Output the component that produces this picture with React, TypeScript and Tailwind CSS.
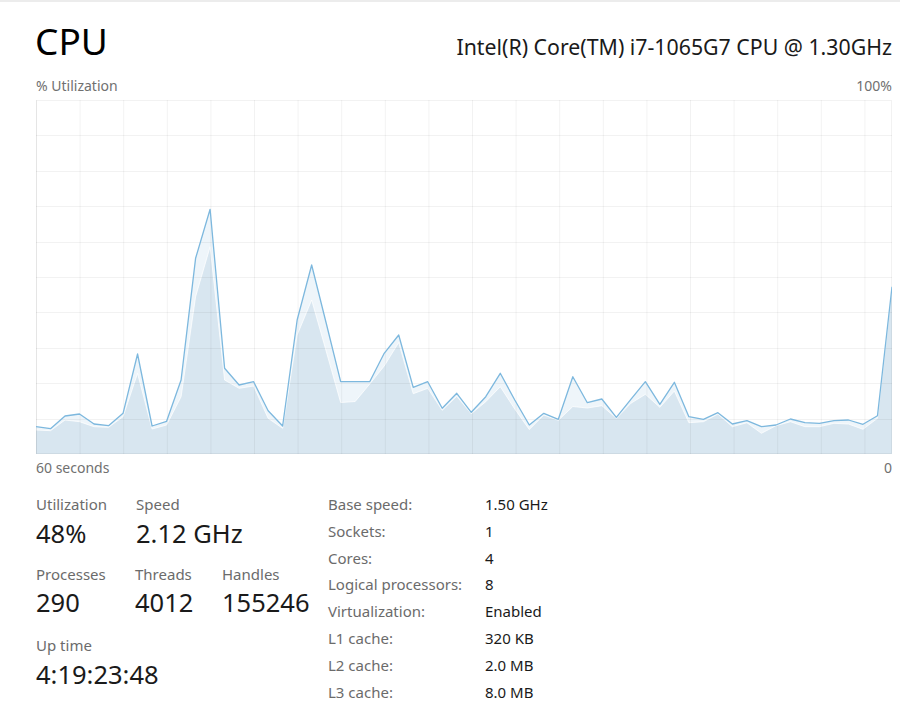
import React from "react";

const outer = [426.7,428.7,416,414,424,425.7,413.3,354,426,421.3,380,258.3,209.3,368.3,385,381.7,410.7,426,320,265,323,381.7,381.7,381.7,353.3,335,387.3,381.7,408.3,393.3,412.3,396.7,373.3,400,425,413.3,419.3,376.7,402.7,399,417.3,399.3,381.7,404.3,382.3,416.7,419.3,412.7,424,420.7,426.7,425,419,422.7,423.3,420.7,420,424.3,415.7,286.7];
const inner = [430,430.7,420,421.7,426.7,427.3,416.7,373.3,429,425,396.7,296.7,246.7,380,388.3,386,418.3,428.3,335,300,351,402.5,401.5,384,366,342.5,393.7,388.3,410.3,396.3,413.7,401.7,386.7,409,429.5,415,420.3,406.5,408,405.7,418.3,403.3,394.3,407.3,391,422.7,421.7,414,426.7,422.7,433.3,425.7,421.7,426.7,426.7,423.3,424,429.3,418.3,288.3];

const W = 856;
const H = 354;
const step = W / 59;

function pts(arr: number[]) {
  return arr.map((y, i) => `${(i * step).toFixed(2)},${(y - 100).toFixed(2)}`).join(" ");
}

function Chart() {
  const o = pts(outer);
  const n = pts(inner);
  const vlines: number[] = [];
  for (let x = 0; x < W; x += 43.6) vlines.push(x);
  const hlines: number[] = [];
  for (let k = 1; k < 10; k++) hlines.push(k * 35.4);
  return (
    <svg width={W} height={H} viewBox={`0 0 ${W} ${H}`} className="block">
      <polygon points={`0,${H} ${o} ${W},${H}`} fill="#eef5fa" />
      <polygon points={`0,${H} ${n} ${W},${H}`} fill="#d8e6f0" />
      <polyline points={n} fill="none" stroke="#ffffff" strokeOpacity="0.75" strokeWidth="1" />
      {vlines.map((x) => (
        <line key={"v" + x} x1={x + 0.5} y1={0} x2={x + 0.5} y2={H} stroke="#000" strokeOpacity="0.05" strokeWidth="1" />
      ))}
      {hlines.map((y) => (
        <line key={"h" + y} x1={0} y1={Math.round(y) + 0.5} x2={W} y2={Math.round(y) + 0.5} stroke="#000" strokeOpacity="0.05" strokeWidth="1" />
      ))}
      <rect x={0.5} y={0.5} width={W - 1} height={H - 1} fill="none" stroke="#000" strokeOpacity="0.05" />
      <polyline points={o} fill="none" stroke="#7db8de" strokeWidth="1.3" strokeLinejoin="round" />
    </svg>
  );
}

const details: [string, string][] = [
  ["Base speed:", "1.50 GHz"],
  ["Sockets:", "1"],
  ["Cores:", "4"],
  ["Logical processors:", "8"],
  ["Virtualization:", "Enabled"],
  ["L1 cache:", "320 KB"],
  ["L2 cache:", "2.0 MB"],
  ["L3 cache:", "8.0 MB"],
];

function Stat({ label, value, w, gap }: { label: string; value: string; w: string; gap: string }) {
  return (
    <div className={w}>
      <div className={`text-[15px] leading-[20px] text-[#6b6b6b] ${gap}`}>{label}</div>
      <div className="text-[25.5px] leading-[30px] text-[#1a1a1a]">{value}</div>
    </div>
  );
}

export default function App() {
  return (
    <div className="w-[900px] h-[713px] bg-white overflow-hidden font-['Noto_Sans',sans-serif]">
      <div className="h-[2px] bg-[#ececec]" />
      <div className="pl-[36px] pr-[8px]">
        <div className="mt-[16px] flex justify-between items-baseline">
          <div className="text-[37px] leading-[46px] text-black -ml-[1px]">CPU</div>
          <div className="text-[21.3px] leading-[26px] text-[#1a1a1a]">Intel(R) Core(TM) i7-1065G7 CPU @ 1.30GHz</div>
        </div>
        <div className="mt-[13px] flex justify-between text-[14px] leading-[18px] text-[#707070]">
          <span>% Utilization</span>
          <span>100%</span>
        </div>
        <div className="mt-[5px]">
          <Chart />
        </div>
        <div className="mt-[5px] flex justify-between text-[14px] leading-[18px] text-[#707070]">
          <span>60 seconds</span>
          <span>0</span>
        </div>
        <div className="mt-[14px] flex">
          <div className="w-[292px] pt-[3px]">
            <div className="flex">
              <Stat label="Utilization" value="48%" w="w-[100px]" gap="mb-[4px]" />
              <Stat label="Speed" value="2.12 GHz" w="" gap="mb-[4px]" />
            </div>
            <div className="flex mt-[16px]">
              <Stat label="Processes" value="290" w="w-[99px]" gap="mb-[3px]" />
              <Stat label="Threads" value="4012" w="w-[87px]" gap="mb-[3px]" />
              <Stat label="Handles" value="155246" w="" gap="mb-[3px]" />
            </div>
            <div className="mt-[18px]">
              <Stat label="Up time" value="4:19:23:48" w="" gap="mb-[4px]" />
            </div>
          </div>
          <div className="grid grid-cols-[157px_auto] text-[15px] leading-[26.8px]">
            {details.map(([k, v]) => (
              <React.Fragment key={k}>
                <div className="text-[#6b6b6b]">{k}</div>
                <div className="text-[#1a1a1a]">{v}</div>
              </React.Fragment>
            ))}
          </div>
        </div>
      </div>
    </div>
  );
}
